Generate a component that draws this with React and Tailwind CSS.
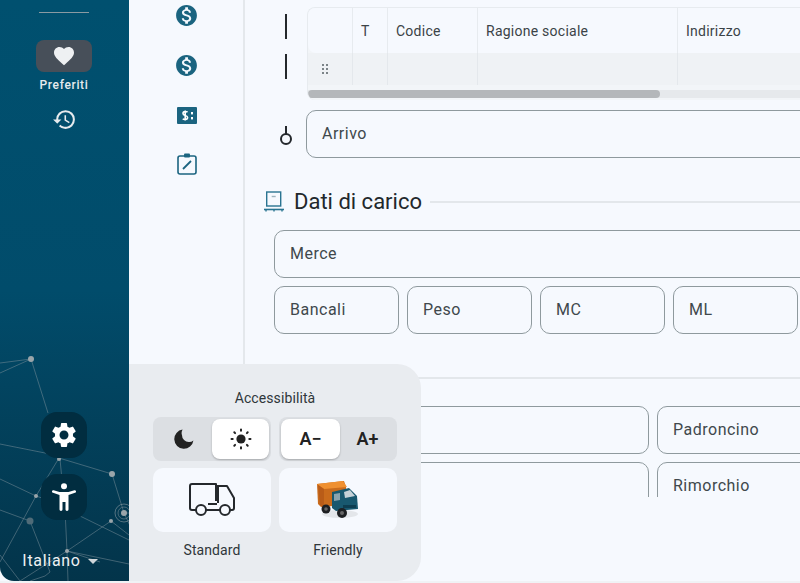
import React from "react";
import { MdMonetizationOn, MdFavorite, MdRestore, MdSettings, MdArrowDropDown } from "react-icons/md";

const font = { fontFamily: "Roboto, 'Liberation Sans', sans-serif" };

function Network() {
  const lines = [
    "M0 363 L31 359 L48 413", "M0 373 L31 359", "M0 444 L45 453 L59 458", "M59 458 L112 474 L124 513 L132 530",
    "M59 458 L36 496 L0 562", "M0 479 L36 496 L42 498", "M0 510 L30 521", "M80 516 L129 540", "M124 513 L129 513",
    "M111 521 L67 551 L20 581", "M111 521 L129 535", "M65 510 L67 551 L68 581", "M67 551 L129 564", "M67 551 L100 562",
    "M30 521 L50 572 L45 576 L30 581", "M60 459 L62 480", "M0 555 L20 581",
  ];
  return (
    <svg className="absolute inset-0 pointer-events-none" width="129" height="581" viewBox="0 0 129 581" fill="none">
      {lines.map((d, i) => <path key={i} d={d} stroke="#7d929c" strokeOpacity="0.5" strokeWidth="1" />)}
      <circle cx="124" cy="513" r="9" stroke="#8a9aa2" strokeOpacity="0.6" />
      <circle cx="124" cy="513" r="6" stroke="#8a9aa2" strokeOpacity="0.5" />
      {[[31,359,3],[112,474,3],[36,496,2],[124,513,3],[111,521,2],[67,551,2],[59,459,2]].map(([x,y,r],i)=>(
        <circle key={i} cx={x} cy={y} r={r} fill="#9aa5aa" />
      ))}
      <circle cx="30" cy="521" r="3.5" fill="#4f6b78" />
    </svg>
  );
}

function Person() {
  return (
    <svg width="24" height="28" viewBox="0 0 24 28" fill="#fff">
      <circle cx="12" cy="3.2" r="3" />
      <path d="M1.6 7.2 L7.5 9 H16.5 L22.4 7.2 A1.3 1.3 0 0 1 23 9.8 L16.5 12 V26.5 A1.5 1.5 0 0 1 13.5 26.5 V19 H10.5 V26.5 A1.5 1.5 0 0 1 7.5 26.5 V12 L1 9.8 A1.3 1.3 0 0 1 1.6 7.2z" />
    </svg>
  );
}

function Moon() {
  return (
    <svg width="20" height="20" viewBox="0 0 20 20">
      <path fill="#222" d="M8.6 0.6 A9.6 9.6 0 1 0 19.4 11.4 A6.6 6.6 0 0 1 15 13 A6.8 6.8 0 0 1 8 6.2 A6.4 6.4 0 0 1 8.6 0.6z" />
    </svg>
  );
}

function Cash() {
  return (
    <svg width="20" height="17" viewBox="0 0 20 17">
      <path fillRule="evenodd" fill="#1b6480" d="M1 0h18a1 1 0 0 1 1 1v15a1 1 0 0 1-1 1H1a1 1 0 0 1-1-1V1a1 1 0 0 1 1-1z" />
      <path d="M10.5 5.2C9.8 4.4 6 4 6 6.5c0 2.6 4.6 1.4 4.6 4 0 2.6-4 2.2-4.8 1.2M8.2 3.5v10" stroke="#fff" strokeWidth="1.6" fill="none" />
      <rect x="14" y="5" width="2" height="2.4" fill="#fff" />
      <rect x="14" y="10" width="2" height="2.4" fill="#fff" />
    </svg>
  );
}

function Clip() {
  return (
    <svg width="20" height="22" viewBox="0 0 20 22" fill="none">
      <rect x="1" y="3" width="18" height="18" rx="2" stroke="#1b6480" strokeWidth="1.6" />
      <rect x="7" y="0.5" width="6" height="4" rx="1" fill="#1b6480" />
      <path d="M6 16l8-8" stroke="#1b6480" strokeWidth="1.8" />
    </svg>
  );
}

function Sun() {
  return (
    <svg width="24" height="24" viewBox="0 0 24 24" fill="#222">
      <circle cx="12" cy="12" r="4.6" />
      <g stroke="#222" strokeWidth="2" strokeLinecap="round">
        <path d="M12 2.5v1.2M12 20.3v1.2M2.5 12h1.2M20.3 12h1.2M5.3 5.3l.8.8M17.9 17.9l.8.8M5.3 18.7l.8-.8M17.9 6.1l.8-.8" />
      </g>
    </svg>
  );
}

function TruckLine() {
  return (
    <svg width="46" height="34" viewBox="0 0 46 34" fill="none" stroke="#24282c" strokeWidth="2" strokeLinejoin="round">
      <path d="M7 27H3a2 2 0 0 1-2-2V3a2 2 0 0 1 2-2h24v17" />
      <path d="M27 3h11l7 12v10a2 2 0 0 1-2 2h-2M29 3v17" />
      <circle cx="12" cy="27" r="5" />
      <circle cx="36" cy="27" r="5" />
      <path d="M17 27h14M19 21h9" />
    </svg>
  );
}

function TruckColor() {
  return (
    <svg width="44" height="40" viewBox="0 0 44 40">
      <ellipse cx="24" cy="34" rx="18" ry="4" fill="#e3e6ea" />
      <path d="M1 4 L28 1 L30 7 L30 25 L5 27 L2 24z" fill="#c96b1c" />
      <path d="M1 4 L27 1 L31 7 L8 9z" fill="#ef9030" />
      <path d="M2 5 L8 9 L8 27 L4 25z" fill="#b95c18" />
      <path d="M16 12 L33 8 L41 16 L42 29 L20 31 L16 28z" fill="#18586f" />
      <path d="M28 12 L34 10 L39 16 L29 18z" fill="#c6d2d8" />
      <path d="M18 14 L24 13 L24 20 L18 21z" fill="#8aa3ae" />
      <rect x="27" y="25" width="13" height="3" fill="#0d3d50" />
      <circle cx="10" cy="29" r="4.5" fill="#1d1f22" />
      <circle cx="26" cy="33" r="5" fill="#1d1f22" />
      <circle cx="26" cy="33" r="2" fill="#666" />
      <circle cx="10" cy="29" r="1.8" fill="#666" />
    </svg>
  );
}

function PalletIcon() {
  return (
    <svg width="22" height="22" viewBox="0 0 22 22" fill="none" stroke="#2a7491">
      <rect x="3.7" y="1" width="14" height="14" strokeWidth="1.4" />
      <path d="M8.7 5.5h4" stroke="#9fb4be" strokeWidth="1.4" />
      <path d="M1 18.5h20" strokeWidth="1.6" />
      <path d="M3 18.5v2M11 18.5v2M19 18.5v2" strokeWidth="1.4" />
    </svg>
  );
}

function Field({ label, className = "" }) {
  return (
    <div className={`h-12 shrink-0 flex items-center pl-[15px] rounded-[10px] border border-[#8f9a9e] text-base tracking-[0.5px] text-[#40484c] ${className}`}>
      {label}
    </div>
  );
}

function Th({ w, children, border = true }) {
  return (
    <div className={`shrink-0 h-full flex items-center pl-[8px] text-sm tracking-[0.25px] text-[#3b4347] ${w} ${border ? "border-l border-[#e7ebef]" : ""}`}>
      {children}
    </div>
  );
}

export default function App() {
  return (
    <div style={font} className="relative w-[800px] h-[583px] overflow-hidden bg-[#f0f2f5]">
      <div className="flex h-[581px] bg-[#f6f9fe]">
        <aside className="relative w-[129px] shrink-0 h-full rounded-bl-[14px] overflow-hidden bg-gradient-to-b from-[#00506f] via-[#014c6b] to-[#03344a] flex flex-col items-center text-white pr-[1px]">
          <Network />
          <div className="relative w-[50px] h-px bg-[#8a9aa2] mt-3" />
          <div className="relative w-14 h-8 mt-[27px] rounded-lg bg-[#474f59] flex items-center justify-center">
            <MdFavorite size={24} color="#eef0f2" />
          </div>
          <div className="relative text-xs font-medium tracking-[0.65px] mt-[5px] text-[#e6ebee]">Preferiti</div>
          <MdRestore className="relative mt-[14px]" size={25} color="#e6ebee" />
          <div className="relative mt-auto flex flex-col items-center gap-4 mb-[10px]">
            <div className="w-[46px] h-[46px] rounded-2xl bg-[#012d40] flex items-center justify-center">
              <MdSettings size={30} color="#fff" />
            </div>
            <div className="w-[46px] h-[46px] rounded-2xl bg-[#012d40] flex items-center justify-center">
              <Person />
            </div>
            <div className="flex items-center mt-[15px] text-base tracking-[0.7px] text-[#eef1f3] leading-5 mr-[1px]">
              Italiano
              <MdArrowDropDown size={24} color="#cfd6da" className="-my-1" />
            </div>
          </div>
        </aside>

        <nav className="w-[116px] shrink-0 h-full flex flex-col items-center border-r-2 border-[#e4e8ec] pt-[3px] pl-[1px]">
          <MdMonetizationOn size={25} color="#1b6480" />
          <MdMonetizationOn size={25} color="#1b6480" className="mt-[25px]" />
          <div className="h-[25px] mt-[25px] flex items-center"><Cash /></div>
          <div className="h-[25px] mt-[23px] flex items-center"><Clip /></div>
        </nav>

        <main className="flex-1 min-w-0 overflow-hidden h-[497px] flex flex-col pt-[7px]">
          <div className="flex pl-[40px]">
            <div className="w-[22px] shrink-0 flex flex-col items-start pt-[7px]">
              <div className="w-[2px] h-[25px] bg-[#24282c]" />
              <div className="w-[2px] h-[25px] bg-[#24282c] mt-[15px]" />
            </div>
            <div className="w-[520px] h-[93px] shrink-0 rounded-l-lg border-l border-t border-[#e7ebef] overflow-hidden bg-[#f2f5f8]">
              <div className="flex h-[45px] bg-[#f6f9fe] rounded-bl-lg">
                <Th w="w-[44px]" border={false} />
                <Th w="w-[35px]">T</Th>
                <Th w="w-[90px]">Codice</Th>
                <Th w="w-[200px]">Ragione sociale</Th>
                <Th w="w-[150px]">Indirizzo</Th>
              </div>
              <div className="flex h-[32px] bg-[#eff2f5]">
                <div className="w-[44px] h-full flex items-center pl-[14px]">
                  <div className="grid grid-cols-2 gap-[2px]">
                    {[0,1,2,3,4,5].map((i) => <span key={i} className="w-[2px] h-[2px] bg-[#7c8488]" />)}
                  </div>
                </div>
                <div className="w-[35px] border-l border-[#e4e8ec]" />
                <div className="w-[90px] border-l border-[#e4e8ec]" />
                <div className="w-[200px] border-l border-[#e4e8ec]" />
                <div className="w-[150px] border-l border-[#e4e8ec]" />
              </div>
              <div className="mt-[5px] h-[8px] bg-[#e6e9ec]">
                <div className="w-[352px] h-full rounded-full bg-[#b4b7ba]" />
              </div>
            </div>
          </div>

          <div className="flex items-center mt-[10px] pl-[34px]">
            <svg width="14" height="22" viewBox="0 0 14 22" fill="none" stroke="#24282c" strokeWidth="2" className="shrink-0 mt-[3px]">
              <path d="M7 1v8" />
              <circle cx="7" cy="14" r="5" />
            </svg>
            <Field label="Arrivo" className="ml-[13px] w-[560px]" />
          </div>

          <div className="flex items-center mt-[32px] pl-[18px]">
            <PalletIcon />
            <span className="ml-[9px] text-[22px] leading-6 text-[#22282c] whitespace-nowrap">Dati di carico</span>
            <div className="ml-2 flex-1 h-[2px] bg-[#e3e7eb]" />
          </div>

          <Field label="Merce" className="mt-[16px] ml-[29px] w-[560px]" />
          <div className="flex gap-2 mt-2 ml-[29px]">
            <Field label="Bancali" className="w-[125px]" />
            <Field label="Peso" className="w-[125px]" />
            <Field label="MC" className="w-[125px]" />
            <Field label="ML" className="w-[125px]" />
          </div>

          <div className="h-[2px] bg-[#e3e7eb] mt-[43px] shrink-0" />

          <div className="flex gap-2 mt-[27px] ml-[29px]">
            <Field label="" className="w-[375px]" />
            <Field label="Padroncino" className="w-[200px]" />
          </div>
          <div className="flex gap-2 mt-2 ml-[29px]">
            <Field label="" className="w-[375px]" />
            <Field label="Rimorchio" className="w-[200px]" />
          </div>
        </main>
      </div>

      <div className="absolute left-[129px] top-[364px] w-[292px] h-[217px] rounded-r-[24px] bg-[#e9ecf0] flex flex-col items-center pt-[26px]">
        <div className="text-sm leading-4 tracking-[0.1px] text-[#2f363a]">Accessibilità</div>
        <div className="flex gap-2 mt-[11px]">
          <div className="w-[118px] h-[44px] rounded-lg bg-[#dcdfe3] flex items-center p-[2px]">
            <div className="flex-1 flex items-center justify-center"><Moon /></div>
            <div className="w-[57px] h-[40px] rounded-lg bg-white shadow-[0_1px_2px_rgba(0,0,0,0.25)] flex items-center justify-center"><Sun /></div>
          </div>
          <div className="w-[118px] h-[44px] rounded-lg bg-[#dcdfe3] flex items-center p-[2px] text-[#222] font-semibold text-lg">
            <div className="w-[59px] h-[40px] rounded-lg bg-white shadow-[0_1px_2px_rgba(0,0,0,0.25)] flex items-center justify-center">A−</div>
            <div className="flex-1 flex items-center justify-center">A+</div>
          </div>
        </div>
        <div className="flex gap-2 mt-[7px]">
          <div className="w-[118px] h-16 rounded-[10px] bg-[#f6f9fe] flex items-center justify-center"><TruckLine /></div>
          <div className="w-[118px] h-16 rounded-[10px] bg-[#f6f9fe] flex items-center justify-center"><TruckColor /></div>
        </div>
        <div className="flex gap-2 mt-[10px] text-sm leading-4 tracking-[0.1px] text-[#2f363a]">
          <div className="w-[118px] text-center">Standard</div>
          <div className="w-[118px] text-center">Friendly</div>
        </div>
      </div>
    </div>
  );
}
